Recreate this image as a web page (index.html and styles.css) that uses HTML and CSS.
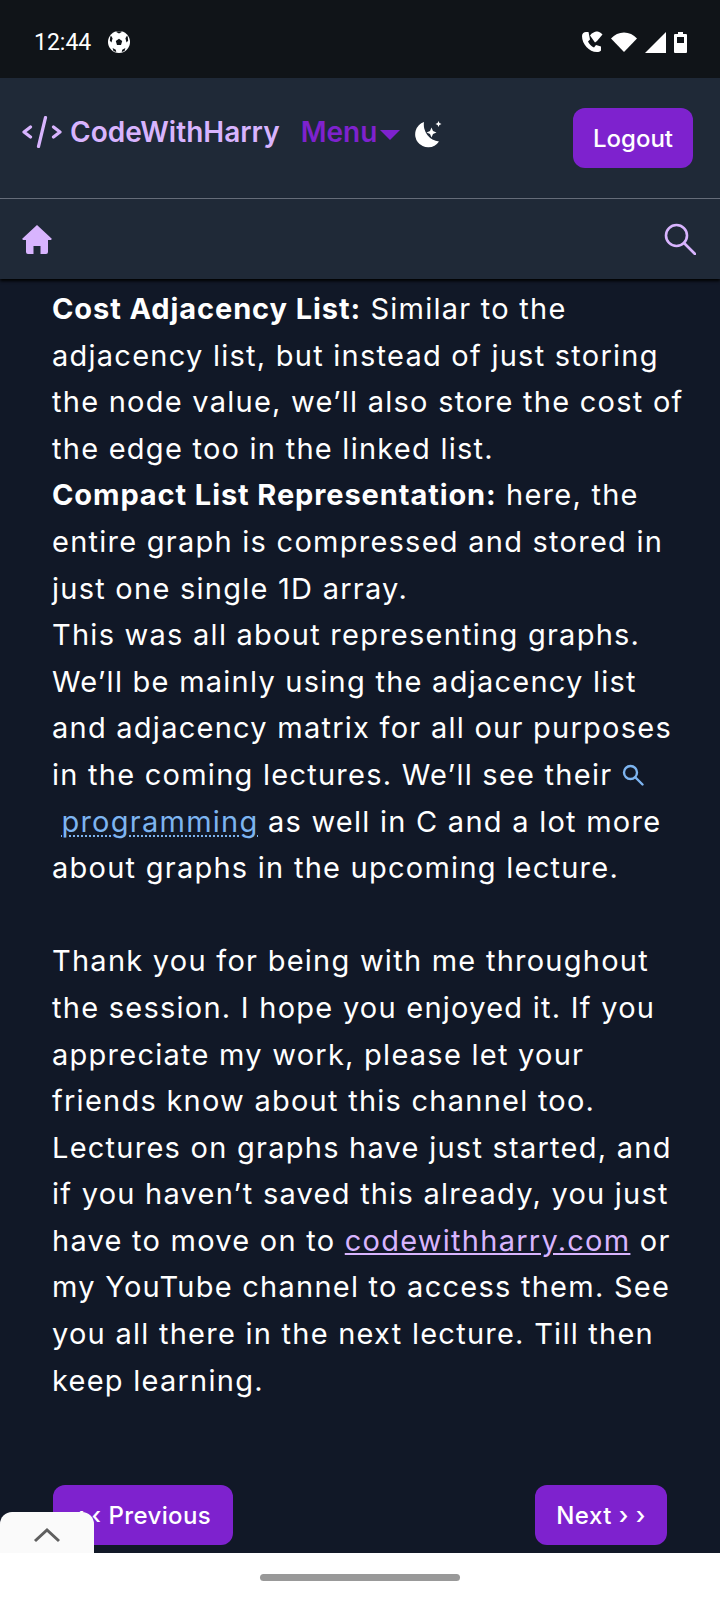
FILE: index.html
```html
<!DOCTYPE html>
<html lang="en">
<head>
  <meta charset="UTF-8">
  <meta name="viewport" content="width=device-width, initial-scale=1.0">
  <title>CodeWithHarry</title>
  <link rel="stylesheet" href="styles.css">
</head>
<body>
  <div class="status-bar">
    <div class="status-left">
      <span class="clock">12:44</span>
      <svg class="ball" viewBox="0 0 24 24" width="22" height="22">
        <circle cx="12" cy="12" r="12" fill="#fff"/>
        <path d="M12 8.500l3.500 2.500-1.300 4.200H9.800L8.500 11zM9 1l3 1.800L15 1l-.5-.7h-5zM2.500 6L2 10.500l1.800 2 1.200-4.500L3.500 5.500zM21.500 6l.5 4.500-1.800 2-1.200-4.500 1.500-2.500zM5 18.500l3.500 2 .5 2.500-3-1.200zM19 18.500l-3.500 2-.5 2.500 3-1.200z" fill="#101418"/>
      </svg>
    </div>
    <div class="status-right">
      <svg viewBox="0 0 22 22" width="22" height="22">
        <path d="M5 1C3 1 1 2.500 1 5c0 8 7 16 15 16 1.500 0 3-.5 4-1.500v-4l-5-1.500-2 2.500c-2.500-1-5-3.500-6-6l2-2L7.500 1z" fill="#fff"/>
        <path d="M9 4.500C11 1.500 14.500.5 15.500.5s4 .5 6 3L16 10l-2 1.500z" fill="#fff"/>
      </svg>
      <svg viewBox="0 0 26 20" width="26" height="20">
        <path d="M13 20L0 6.500C3.500 2.500 8 .5 13 .5s9.500 2 13 6z" fill="#fff"/>
      </svg>
      <svg viewBox="0 0 21 21" width="21" height="21">
        <path d="M21 0v21H0z" fill="#fff"/>
      </svg>
      <svg viewBox="0 0 13 21" width="13" height="21">
        <path d="M4 0h5v2h3a1 1 0 0 1 1 1v17a1 1 0 0 1-1 1H1a1 1 0 0 1-1-1V3a1 1 0 0 1 1-1h3z" fill="#fff"/>
        <rect x="3" y="5" width="7" height="6" fill="#101418"/>
      </svg>
    </div>
  </div>

  <header class="top-nav">
    <div class="brand">
      <svg class="brand-mark" viewBox="0 0 40 32" width="40" height="32">
        <path d="M8.500 11L2 16l6.500 5M31.500 11L38 16l-6.500 5M23.500 1.500L16.500 30.500" fill="none" stroke="#d8b4fe" stroke-width="3.200" stroke-linecap="round" stroke-linejoin="round"/>
      </svg>
      <span class="brand-name">CodeWithHarry</span>
    </div>
    <span class="menu-link">Menu<span class="caret"></span></span>
    <svg class="moon" viewBox="0 0 28 28" width="28" height="28">
      <path d="M10 2A13 13 0 1 0 25 21.500 17 17 0 0 1 10 2z" fill="#fff"/>
      <path d="M17.500 7.500l1.500 3.500 3.500 1.500-3.500 1.500-1.500 3.500-1.500-3.500-3.500-1.500 3.500-1.500zM24.500 1l.9 2.100 2.100.9-2.100.9-.9 2.100-.9-2.100-2.100-.9 2.100-.9z" fill="#fff"/>
    </svg>
    <button class="btn logout">Logout</button>
  </header>

  <nav class="sub-nav">
    <svg viewBox="0 0 30 29" width="30" height="29">
      <path d="M15 0L29 13a1 1 0 0 1-.7 1.900H26V27a2 2 0 0 1-2 2h-5.500v-8h-7v8H6a2 2 0 0 1-2-2V14.900H1.700A1 1 0 0 1 1 13z" fill="#d8b4fe"/>
    </svg>
    <svg viewBox="0 0 32 32" width="32" height="32">
      <circle cx="12.500" cy="12.500" r="10.500" fill="none" stroke="#d8b4fe" stroke-width="2.600"/>
      <path d="M20 20l11 11" stroke="#d8b4fe" stroke-width="2.600" stroke-linecap="round"/>
    </svg>
  </nav>

  <main class="content">
    <article class="article">
      <p><b>Cost Adjacency List:</b> Similar to the<br>
      adjacency list, but instead of just storing<br>
      the node value, we’ll also store the cost of<br>
      the edge too in the linked list.<br>
      <b>Compact List Representation:</b> here, the<br>
      entire graph is compressed and stored in<br>
      just one single 1D array.<br>
      This was all about representing graphs.<br>
      We’ll be mainly using the adjacency list<br>
      and adjacency matrix for all our purposes<br>
      in the coming lectures. We’ll see their <svg class="kw-icon" viewBox="0 0 22 22" width="22" height="22"><circle cx="8.500" cy="8.500" r="6.500" fill="none" stroke="#7db4f0" stroke-width="2.400"/><path d="M13.500 13.500l7 7" stroke="#7db4f0" stroke-width="2.400" stroke-linecap="round"/></svg><br>
      &nbsp;<a class="kw-link">programming</a> as well in C and a lot more<br>
      about graphs in the upcoming lecture.</p>
      <p>Thank you for being with me throughout<br>
      the session. I hope you enjoyed it. If you<br>
      appreciate my work, please let your<br>
      friends know about this channel too.<br>
      Lectures on graphs have just started, and<br>
      if you haven’t saved this already, you just<br>
      have to move on to <a class="site-link">codewithharry.com</a> or<br>
      my YouTube channel to access them. See<br>
      you all there in the next lecture. Till then<br>
      keep learning.</p>
    </article>
    <div class="pager">
      <button class="btn prev">‹ ‹ Previous</button>
      <button class="btn next">Next › ›</button>
    </div>
    <div class="to-top">
      <svg viewBox="0 0 28 16" width="28" height="16">
        <path d="M2 14L14 3l12 11" fill="none" stroke="#5f5f5f" stroke-width="3"/>
      </svg>
    </div>
  </main>

  <div class="gesture-bar"><span class="gesture-pill"></span></div>
</body>
</html>
```

FILE: styles.css
```css
* {
  box-sizing: border-box;
}

body {
  margin: 0;
  width: 720px;
  height: 1600px;
  display: flex;
  flex-direction: column;
  overflow: hidden;
  background: #111827;
  color: #fff;
  font-family: "Inter", "Open Sans", sans-serif;
}

.status-bar {
  height: 78px;
  flex: none;
  display: flex;
  justify-content: space-between;
  align-items: center;
  padding: 6px 33px 0 34px;
  background: #101418;
}

.status-left,
.status-right {
  display: flex;
  align-items: center;
}

.status-left {
  gap: 17px;
}

.status-right {
  gap: 8px;
}

.clock {
  font-family: "Roboto", sans-serif;
  font-size: 23px;
}

.top-nav {
  height: 121px;
  flex: none;
  display: flex;
  align-items: center;
  padding: 0 27px 0 22px;
  background: #1f2937;
  border-bottom: 1px solid #6b7280;
}

.brand {
  display: flex;
  align-items: center;
  gap: 8px;
  margin-top: -12px;
}

.brand-name {
  font-size: 28px;
  font-weight: 600;
  color: #d8b4fe;
}

.menu-link {
  display: flex;
  align-items: center;
  margin: -12px 0 0 21px;
  font-size: 28px;
  font-weight: 600;
  color: #7e22ce;
}

.caret {
  width: 0;
  height: 0;
  margin: 5px 0 0 3px;
  border-left: 10px solid transparent;
  border-right: 10px solid transparent;
  border-top: 10px solid #7e22ce;
}

.moon {
  margin: -8px 0 0 14px;
}

.btn {
  border: none;
  border-radius: 12px;
  background: #7e22ce;
  color: #fff;
  font-family: inherit;
  font-size: 24px;
  font-weight: 500;
  height: 60px;
  padding: 0;
}

.logout {
  width: 120px;
  margin: 0 0 0 auto;
}

.sub-nav {
  height: 80px;
  flex: none;
  display: flex;
  justify-content: space-between;
  align-items: center;
  padding: 0 24px 0 22px;
  background: #1f2937;
  box-shadow: 0 2px 3px #000;
}

.content {
  flex: 1;
  position: relative;
  display: flex;
  flex-direction: column;
  justify-content: space-between;
  padding: 7px 53px 8px 52px;
  overflow: hidden;
}

.article p {
  margin: 0 0 46.6px;
  font-size: 29px;
  line-height: 46.6px;
  letter-spacing: 1.25px;
  white-space: nowrap;
}

.article b {
  letter-spacing: 0.9px;
}

.kw-icon {
  vertical-align: -1px;
}

.kw-link {
  color: #7db4f0;
  text-decoration: underline dotted 2px;
  text-underline-offset: 4px;
}

.site-link {
  color: #d8b4fe;
  text-decoration: underline;
}

.pager {
  display: flex;
  justify-content: space-between;
  padding-left: 1px;
}

.prev {
  width: 180px;
  letter-spacing: 0.4px;
}

.next {
  width: 132px;
  letter-spacing: 0.5px;
}

.to-top {
  position: absolute;
  left: 0;
  bottom: 0;
  width: 94px;
  height: 41px;
  display: flex;
  justify-content: center;
  align-items: center;
  padding-top: 4px;
  background: #fafafa;
  border-top-right-radius: 12px;
  border-top-left-radius: 12px;
}

.gesture-bar {
  height: 47px;
  flex: none;
  display: flex;
  justify-content: center;
  padding-top: 21px;
  background: #fff;
}

.gesture-pill {
  width: 200px;
  height: 7px;
  border-radius: 4px;
  background: #999;
}
```
